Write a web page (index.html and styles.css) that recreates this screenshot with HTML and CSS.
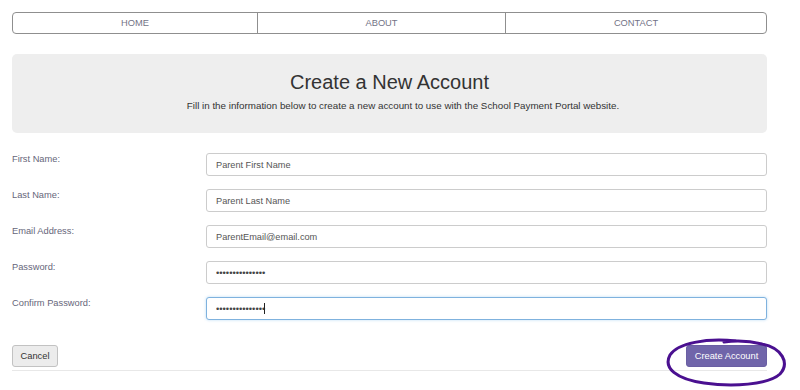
FILE: index.html
```html
<!DOCTYPE html>
<html>
<head>
<meta charset="utf-8">
<link rel="stylesheet" href="styles.css">
</head>
<body>
<div class="page">
  <nav class="nav">
    <a class="nav-item">HOME</a>
    <a class="nav-item">ABOUT</a>
    <a class="nav-item">CONTACT</a>
  </nav>
  <header class="jumbo">
    <h1 class="title">Create a New Account</h1>
    <p class="lead">Fill in the information below to create a new account to use with the School Payment Portal website.</p>
  </header>
  <form class="form">
    <label class="label">First Name:</label>
    <input class="field" type="text" value="Parent First Name">
    <label class="label">Last Name:</label>
    <input class="field" type="text" value="Parent Last Name">
    <label class="label">Email Address:</label>
    <input class="field" type="text" value="ParentEmail@email.com">
    <label class="label">Password:</label>
    <input class="field" type="password" value="passwordpasswor">
    <label class="label">Confirm Password:</label>
    <div class="field-wrap">
      <input class="field focused" type="password" value="passwordpasswor">
      <span class="caret"></span>
    </div>
  </form>
  <div class="actions">
    <button class="btn btn-cancel" type="button">Cancel</button>
    <div class="create-wrap">
      <button class="btn btn-create" type="button">Create Account</button>
      <svg class="scribble" width="124" height="54" viewBox="0 0 124 54">
        <path d="M72 4 C 42 1, 14 6, 6 18 C -1 31, 12 42, 40 46 C 68 50, 104 48, 116 37 C 126 26, 118 11, 98 7 C 86 4, 74 3, 60 5" fill="none" stroke="#4a1090" stroke-width="3" stroke-linecap="round"/>
      </svg>
    </div>
  </div>
  <hr class="rule">
</div>
</body>
</html>
```
FILE: styles.css
```css
* { box-sizing: border-box; }
html, body { margin: 0; padding: 0; background: #fff; }
body { font-family: "Liberation Sans", Arial, sans-serif; }
.page { padding: 12px 33px 18px 12px; min-height: 390px; }
.nav {
  display: grid;
  grid-template-columns: 244px 248px 1fr;
  height: 22px;
  border: 1px solid #8f8f8f;
  border-radius: 4px;
}
.nav-item {
  display: flex; align-items: center; justify-content: center;
  font-size: 9.3px; color: #737386;
  border-left: 1px solid #8f8f8f;
}
.nav-item:first-child { border-left: none; }
.jumbo {
  margin-top: 20px;
  height: 79px;
  background: #eeeeee;
  border-radius: 5px;
  text-align: center;
  padding-top: 16px;
}
.title {
  margin: 0;
  font-weight: normal;
  font-size: 20px;
  line-height: 24px;
  color: #333;
}
.lead {
  margin: 6px 0 0;
  padding-left: 27px;
  font-size: 9.8px;
  line-height: 12px;
  color: #333;
}
.form {
  margin-top: 20px;
  display: grid;
  grid-template-columns: 194px 1fr;
  row-gap: 13px;
}
.label {
  font-size: 9.3px;
  line-height: 12px;
  color: #66667a;
  padding-top: 0;
}
.field {
  width: 100%;
  height: 23px;
  border: 1px solid #cccccc;
  border-radius: 3px;
  padding: 0 9px;
  font-family: "Liberation Sans", Arial, sans-serif;
  font-size: 9.2px;
  color: #555;
  background: #fff;
  outline: none;
}
.field[type=password] { font-size: 9.4px; letter-spacing: 0; color: #444; }
.field-wrap { position: relative; }
.focused {
  border-color: #7fb2de;
  box-shadow: 0 0 3px rgba(102, 175, 233, 0.45);
}
.caret {
  position: absolute;
  left: 58px; top: 6px;
  width: 1px; height: 11px;
  background: #222;
}
.actions {
  margin-top: 25px;
  display: flex;
  justify-content: space-between;
  align-items: flex-start;
}
.btn {
  height: 22px;
  border-radius: 3px;
  font-family: "Liberation Sans", Arial, sans-serif;
  font-size: 9.3px;
  padding: 0;
  white-space: nowrap;
  cursor: pointer;
}
.btn-cancel {
  width: 46px;
  background: #ececec;
  border: 1px solid #c2c2c2;
  color: #333;
}
.create-wrap { position: relative; }
.btn-create {
  width: 81px;
  background: #7065aa;
  border: 1px solid #6a5fa3;
  color: #fff;
}
.scribble {
  position: absolute;
  left: -22px; top: -8px;
}
.rule {
  margin: 3px 0 0;
  border: none;
  border-top: 1px solid #e8e8e8;
}
```
